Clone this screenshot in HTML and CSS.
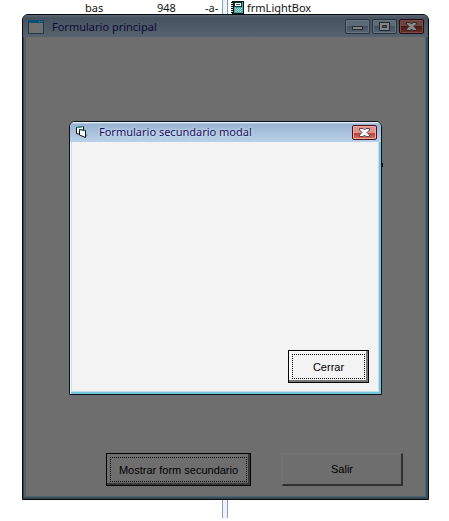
FILE: index.html
```
<!DOCTYPE html>
<html lang="es">
<head>
<meta charset="utf-8">
<title>Formulario principal</title>
<link rel="stylesheet" href="styles.css">
</head>
<body>
<div class="desktop">
  <div class="pane file-row"><span class="file-type">bas</span><span class="file-size">948</span><span class="file-attr">-a-</span></div>
  <div class="splitter"></div>
  <div class="pane tree-row">
    <svg class="module-icon" width="14" height="16" viewBox="0 0 14 16" shape-rendering="crispEdges" aria-hidden="true">
      <path d="M1 1H13V15H1Z" fill="#021a1c"/>
      <path d="M0 2h3v1H0zM0 4h3v1H0zM0 6h3v1H0zM0 8h3v1H0zM0 10h3v1H0zM0 12h3v1H0z" fill="#111"/>
      <path d="M1 3h1v1H1zM1 5h1v1H1zM1 7h1v1H1zM1 9h1v1H1zM1 11h1v1H1z" fill="#d8d8b0"/>
      <path d="M3 2H12V13H3Z" fill="#4fa5a4"/>
      <path d="M3 2H11V7H3Z" fill="#043b3d"/>
      <path d="M4 3H10V6H4Z" fill="#fff"/>
      <path d="M5 4H9V5H5Z" fill="#555"/>
      <path d="M4 8h1v1H4zM6 8h1v1H6zM8 8h1v1H8zM10 8h1v1h-1zM5 9h1v1H5zM7 9h1v1H7zM9 9h1v1H9zM4 10h1v1H4zM6 10h1v1H6zM8 10h1v1H8zM10 10h1v1h-1zM5 11h1v1H5zM7 11h1v1H7zM9 11h1v1H9z" fill="#a6dada"/>
    </svg>
    <span>frmLightBox</span>
  </div>
</div>

<main class="window main-window">
  <header class="titlebar">
    <svg class="app-icon" width="16" height="14" viewBox="0 0 16 14" shape-rendering="crispEdges" aria-hidden="true">
      <path d="M0 0H16V14H0Z" fill="#25384a"/>
      <path d="M0 0H16V3H0Z" fill="#124c70"/>
      <path d="M1 3H15V13H1Z" fill="#6d706e"/>
      <path d="M11 1h1v1h-1zM13 1h1v1h-1z" fill="#4b7890"/>
    </svg>
    <h1 class="title">Formulario principal</h1>
    <div class="controls">
      <button class="control" aria-label="Minimizar"><svg width="23" height="13" viewBox="0 0 23 13"><path d="M6.500 6.500h10v3h-10z" fill="#858585" stroke="#202832"/></svg></button>
      <button class="control" aria-label="Maximizar"><svg width="23" height="13" viewBox="0 0 23 13"><path d="M6.500 2.500h10v8h-10z" fill="#858585" stroke="#202832"/><path d="M9.500 5.500h4v2h-4z" fill="#4e5a66" stroke="#202832"/></svg></button>
      <button class="control close" aria-label="Cerrar ventana"><svg width="23" height="13" viewBox="0 0 23 13"><path d="M6.500 2.500h3.500l1.500 1.500 1.500-1.500h3.500v1.500l-2.500 2.500 2.500 2.500v1.500h-3.500l-1.500-1.500-1.500 1.500h-3.500V9L9 6.500 6.500 4z" fill="#8b8888" stroke="#302a2d"/></svg></button>
    </div>
  </header>
  <div class="main-content">
    <button class="button default">Mostrar form secundario</button>
    <button class="button">Salir</button>
  </div>
</main>

<span class="label-end"></span>

<section class="window dialog" role="dialog" aria-labelledby="dialog-title">
  <header class="titlebar">
    <svg class="app-icon" width="16" height="14" viewBox="0 0 16 14" aria-hidden="true">
      <path d="M10 9l3 1-2 2z" fill="#8094a5"/>
      <path d="M1.500 2.500l7-1v7l-3 1-4-1z" fill="#fff" stroke="#111"/>
      <path d="M2 2.500l6-1" stroke="#19a9a5"/>
      <path d="M4.500 4.500l6 1v7l-6-2.500z" fill="#fff" stroke="#111"/>
      <path d="M4 4.500l6 1" stroke="#0b6f70"/>
    </svg>
    <h2 class="title" id="dialog-title">Formulario secundario modal</h2>
    <button class="control close" aria-label="Cerrar diálogo"><svg width="23" height="13" viewBox="0 0 23 13"><path d="M6.500 2.500h3.500l1.500 1.500 1.500-1.500h3.500v1.500l-2.500 2.500 2.500 2.500v1.500h-3.500l-1.500-1.500-1.500 1.500h-3.500V9L9 6.500 6.500 4z" fill="#fff" stroke="#57445a"/></svg></button>
  </header>
  <div class="dialog-content">
    <button class="button default">Cerrar</button>
  </div>
</section>
</body>
</html>
```
FILE: styles.css
```
* {
  box-sizing: border-box;
}

body {
  margin: 0;
  background: #fff;
  color: #111;
  font: 11px/16px "Noto Sans", "Open Sans", sans-serif;
}

button {
  padding: 0;
  font: inherit;
}

svg {
  display: block;
}

/* Explorer behind the forms */
.desktop {
  display: grid;
  grid-template-columns: 222px 6px 1fr;
  height: 100vh;
  padding-bottom: 3px;
}

.pane {
  display: flex;
  align-items: flex-start;
}

.file-row {
  justify-content: flex-end;
}

.file-type {
  width: 72px;
}

.file-size {
  width: 48px;
}

.file-attr {
  width: 17px;
}

.splitter {
  border: solid #8b9eb0;
  border-width: 0 1px;
  background: #eef4fb;
}

.tree-row {
  gap: 2px;
  padding-left: 3px;
}

/* Windows */
.window {
  position: absolute;
  display: flex;
  flex-direction: column;
}

.main-window {
  inset: 14px 20px 21px 22px;
  border: 1px solid #060b0f;
  border-radius: 6px 6px 0 0;
  background: #6e6e6e;
  box-shadow: inset 1px -1px #37444c, inset -2px -2px #2f5160, inset 3px -3px #56626a, inset -3px -3px #56626a;
}

.titlebar {
  display: flex;
  align-items: center;
  height: 22px;
  padding: 1px 4px 0 5px;
  border-radius: 5px 5px 0 0;
}

.main-window .titlebar {
  background: linear-gradient(#5b6872 0, #46525f 3px, #56636f 100%);
}

.title {
  flex: 1;
  margin: 0 0 0 8px;
  color: #0d0b34;
  font-size: 11px;
  font-weight: 400;
  line-height: 20px;
  white-space: nowrap;
}

.controls {
  display: flex;
  gap: 2px;
}

.control {
  display: grid;
  width: 25px;
  height: 15px;
  place-items: center;
  border: 1px solid #29333e;
  border-radius: 2px;
  background: linear-gradient(#5c6a78 50%, #45525f 50%, #556472);
  box-shadow: inset 0 0 0 1px #687582;
}

.main-window .close {
  border-color: #250d13;
  background: linear-gradient(#6e423e 50%, #50180f 50%, #6a3228);
  box-shadow: inset 0 0 0 1px #774b48;
}

.main-content {
  display: flex;
  flex: 1;
  justify-content: flex-end;
  align-items: flex-end;
  gap: 31px;
  padding: 0 25px 13px;
}

/* Push buttons */
.button {
  width: 121px;
  height: 33px;
  border: solid;
  border-width: 1px 2px 2px 1px;
  border-color: #737373 #303030 #303030 #737373;
  background: #6e6e6e;
  color: #000;
  font: 11px/14px "Liberation Sans", Arial, sans-serif;
}

.default {
  width: 145px;
  border: 1px solid #000;
  outline: 1px dotted #000;
  outline-offset: -5px;
  box-shadow: inset -2px -2px #383838;
}

.label-end {
  position: absolute;
  top: 163px;
  right: 66px;
  width: 2px;
  height: 4px;
  background: #000;
}

.dialog {
  inset: 121px 67px 126px 69px;
  border: 1px solid #071219;
  border-radius: 6px 6px 0 0;
  background: #f3f3f3;
  box-shadow: inset 1px 0 #fff, inset -2px -2px #74c5db, inset 2px -3px #c4dfec, inset -3px -3px #c4dfec;
}

.dialog .titlebar {
  height: 20px;
  padding-top: 0;
  background: linear-gradient(#fff 0, #98b4d2 2px, #bad1ea 100%);
}

.dialog .close {
  border-color: #4b1020;
  background: linear-gradient(#e0928a 50%, #b83b2b 50%, #d8735f);
  box-shadow: inset 0 0 0 1px #f0aaa2;
}

.dialog .title {
  color: #17105f;
  text-shadow: 0 0 3px #fff;
}

.dialog-content {
  display: flex;
  flex: 1;
  justify-content: flex-end;
  align-items: flex-end;
  padding: 12px;
  padding-bottom: 11px;
}

.dialog .default {
  width: 81px;
  background: #f3f3f3;
  box-shadow: inset -2px -2px #777, inset 1px 1px #fff;
}
```
